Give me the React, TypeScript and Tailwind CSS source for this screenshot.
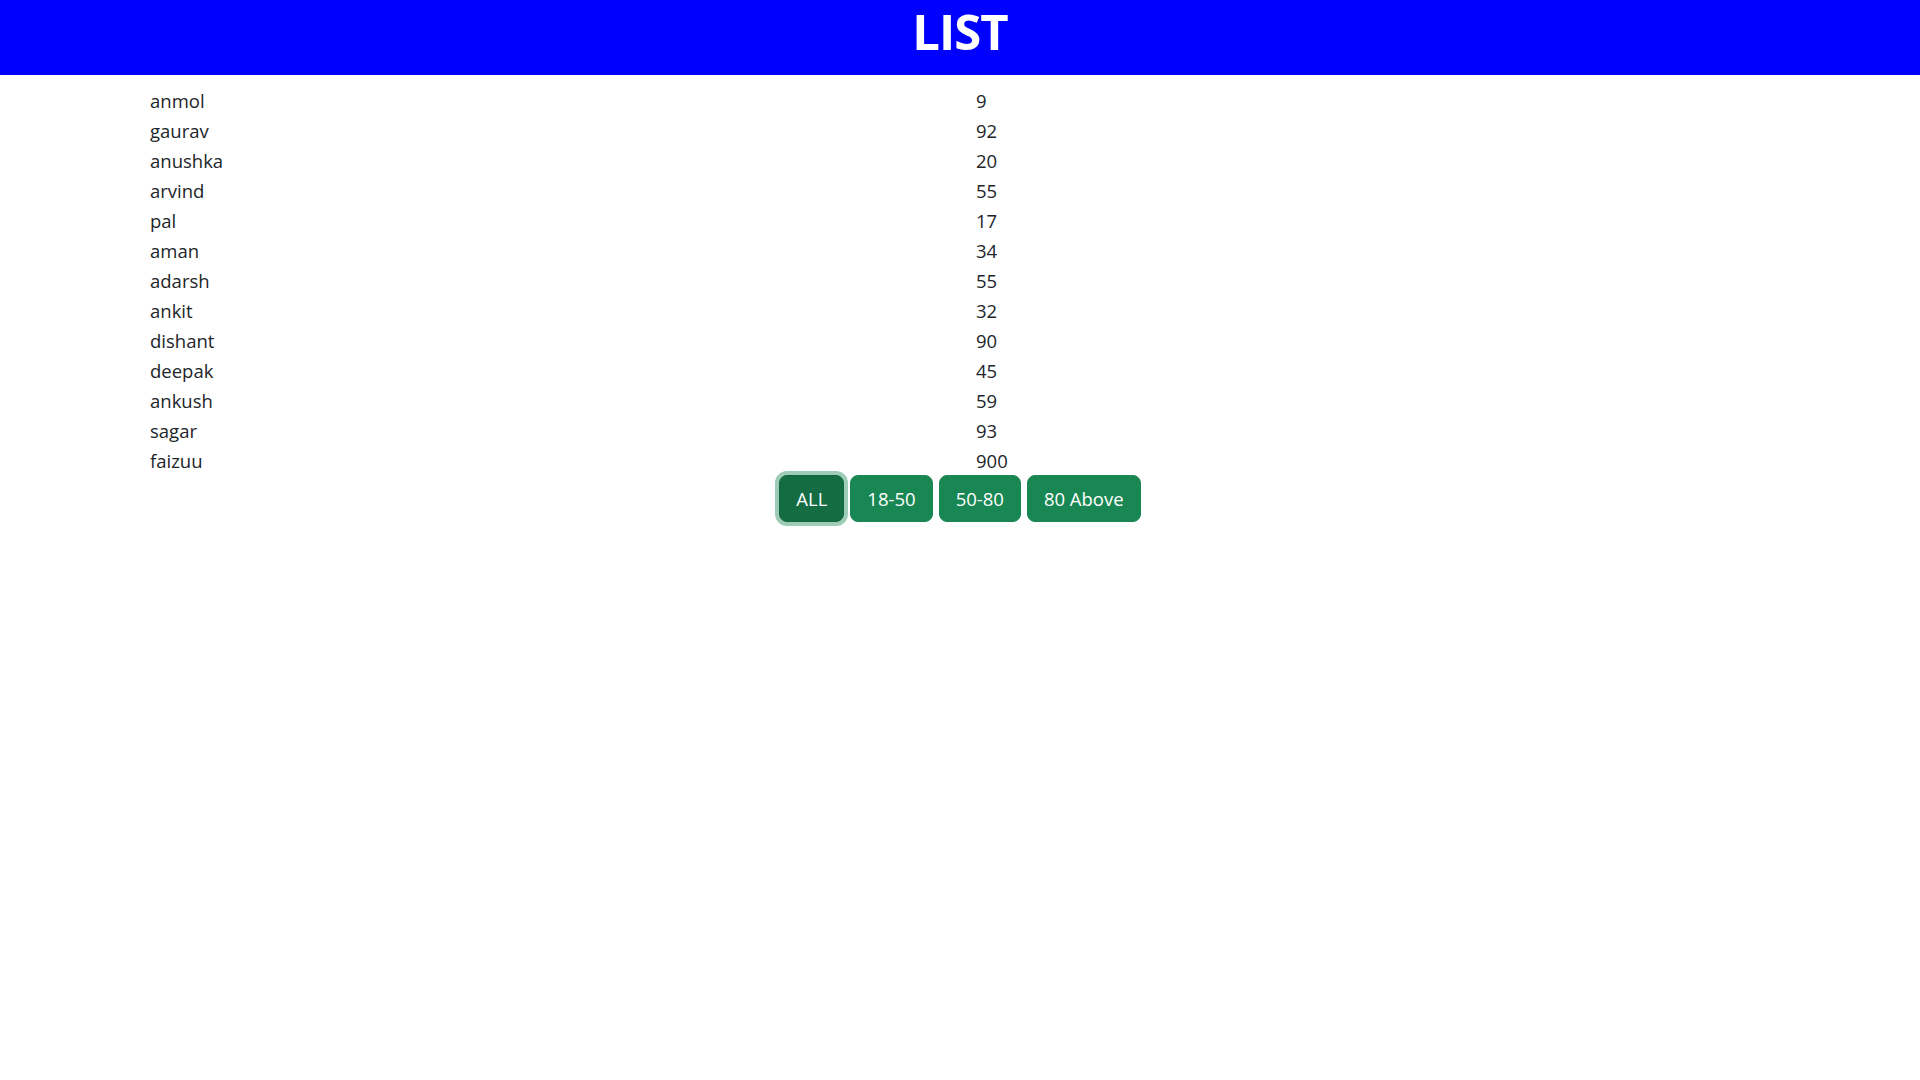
import React from "react";

const people: [string, number][] = [
  ["anmol", 9],
  ["gaurav", 92],
  ["anushka", 20],
  ["arvind", 55],
  ["pal", 17],
  ["aman", 34],
  ["adarsh", 55],
  ["ankit", 32],
  ["dishant", 90],
  ["deepak", 45],
  ["ankush", 59],
  ["sagar", 93],
  ["faizuu", 900],
];

const buttons = ["ALL", "18-50", "50-80", "80 Above"];

export default function App() {
  return (
    <div className="min-h-screen bg-white text-[#212529]" style={{ fontFamily: '"Open Sans", "Noto Sans", sans-serif' }}>
      <header className="h-[75px] bg-[#0000ff] flex items-center justify-center">
        <h1 className="text-white font-bold text-[49px] leading-none tracking-[-1px] pb-[12px]">LIST</h1>
      </header>
      <div className="pt-[11px]">
        {people.map(([name, n]) => (
          <div key={name} className="flex h-[30px] items-center text-[18.5px] leading-[30px]">
            <div className="w-[976px] shrink-0 pl-[150px]">{name}</div>
            <div>{n}</div>
          </div>
        ))}
      </div>
      <div className="flex justify-center gap-[6px] -mt-[1px]">
        {buttons.map((b, i) => (
          <button
            key={b}
            className={
              i === 0
                ? "h-[47px] px-4 rounded-lg border border-[#13653f] bg-[#146c43] text-white text-[18.5px] ring-[4px] ring-[#9ecdb7]"
                : "h-[47px] px-4 rounded-lg border border-[#198754] bg-[#198754] text-white text-[18.5px]"
            }
          >
            {b}
          </button>
        ))}
      </div>
    </div>
  );
}
